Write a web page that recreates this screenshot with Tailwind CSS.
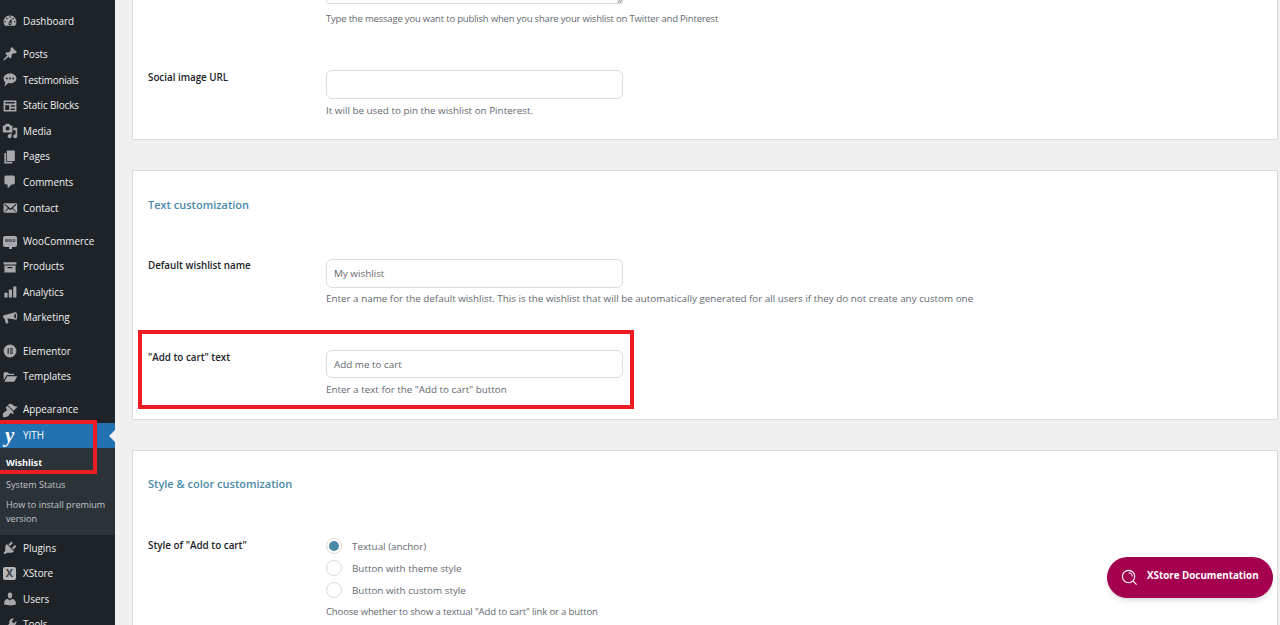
<!DOCTYPE html>
<html>

<head>
    <meta name="viewport" content="width=device-width, initial-scale=1.0">
    <title>Wishlist settings</title>
    <script src="https://cdn.jsdelivr.net/npm/@tailwindcss/browser@4"></script>
</head>

<body class="bg-[#f0f0f1] font-['Open_Sans',sans-serif]">

    <div class="relative flex h-[625px] overflow-hidden">

        <!-- sidebar -->
        <nav class="w-[115px] h-full shrink-0 bg-[#1d2327] pt-[8.4px] text-[9.9px] text-[#f0f0f1] overflow-hidden">
            <a class="flex items-center h-[25.6px]">
                <svg class="w-[16px] h-[16px] ml-[2px] mr-[5px] fill-[#a7aaad]" viewBox="0 0 20 20"><path d="M3.76 16h12.48c1.1-1.37 1.76-3.11 1.76-5 0-4.42-3.58-8-8-8s-8 3.58-8 8c0 1.89.66 3.63 1.76 5zM10 4c.55 0 1 .45 1 1s-.45 1-1 1-1-.45-1-1 .45-1 1-1zM6 6c.55 0 1 .45 1 1s-.45 1-1 1-1-.45-1-1 .45-1 1-1zm8 0c.55 0 1 .45 1 1s-.45 1-1 1-1-.45-1-1 .45-1 1-1zm-5.37 5.55L12 7v6c0 1.1-.9 2-2 2s-2-.9-2-2c0-.57.24-1.08.63-1.45zM4 10c.55 0 1 .45 1 1s-.45 1-1 1-1-.45-1-1 .45-1 1-1zm12 0c.55 0 1 .45 1 1s-.45 1-1 1-1-.45-1-1 .45-1 1-1zm-5 3c0-.55-.45-1-1-1s-1 .45-1 1 .45 1 1 1 1-.45 1-1z" fill-rule="evenodd"/></svg>
                <span>Dashboard</span>
            </a>

            <a class="flex items-center h-[25.6px] mt-[7.6px]">
                <svg class="w-[16px] h-[16px] ml-[2px] mr-[5px] fill-[#a7aaad]" viewBox="0 0 20 20"><path d="M10.44 3.02l1.82-1.82 6.36 6.35-1.83 1.82c-1.05-.68-2.48-.57-3.41.36l-.75.75c-.92.93-1.04 2.35-.35 3.41l-1.83 1.82-2.41-2.41-2.8 2.79c-.42.42-3.38 2.71-3.8 2.29s1.86-3.39 2.28-3.81l2.79-2.79L4.1 9.36l1.83-1.82c1.05.69 2.48.57 3.4-.36l.75-.75c.93-.92 1.05-2.35.36-3.41z"/></svg>
                <span>Posts</span>
            </a>
            <a class="flex items-center h-[25.6px]">
                <svg class="w-[16px] h-[16px] ml-[2px] mr-[5px] fill-[#a7aaad]" viewBox="0 0 20 20"><path fill-rule="evenodd" d="M10 2c4.4 0 8 2.6 8 6s-3.6 6-8 6c-.7 0-1.4-.1-2-.2L3 18l1.2-5.3C2.8 11.6 2 9.900 2 8c0-3.400 3.600-6 8-6zM6 7a1.200 1.200 0 100 2.400A1.200 1.200 0 006 7zm4 0a1.200 1.200 0 100 2.400A1.200 1.200 0 0010 7zm4 0a1.200 1.200 0 100 2.400A1.200 1.200 0 0014 7z"/></svg>
                <span class="tracking-[-0.2px]">Testimonials</span>
            </a>
            <a class="flex items-center h-[25.6px]">
                <svg class="w-[16px] h-[16px] ml-[2px] mr-[5px] fill-[#a7aaad]" viewBox="0 0 20 20"><path fill-rule="evenodd" d="M2 3h16v14H2zM4 5v2h12V5zM4 9v6h5V9zm7 0v2h5V9zm0 4v2h5v-2z"/></svg>
                <span class="tracking-[-0.1px]">Static Blocks</span>
            </a>
            <a class="flex items-center h-[25.6px]">
                <svg class="w-[16px] h-[16px] ml-[2px] mr-[5px] fill-[#a7aaad]" viewBox="0 0 20 20"><path d="M13 11V4c0-.55-.45-1-1-1h-1.670L9 1H5L3.670 3H2c-.55 0-1 .45-1 1v7c0 .55.45 1 1 1h10c.55 0 1-.45 1-1zM7 4.500c1.380 0 2.500 1.120 2.500 2.500S8.380 9.500 7 9.500 4.500 8.380 4.500 7 5.620 4.500 7 4.500zM14 6h5v10.500c0 1.380-1.120 2.500-2.500 2.500S14 17.880 14 16.500s1.120-2.500 2.500-2.500c.17 0 .34.020.5.050V9h-3V6zm-4 8.050V13h2v3.500c0 1.380-1.120 2.500-2.500 2.500S7 17.880 7 16.500 8.120 14 9.500 14c.17 0 .34.020.5.050z"/></svg>
                <span>Media</span>
            </a>
            <a class="flex items-center h-[25.6px]">
                <svg class="w-[16px] h-[16px] ml-[2px] mr-[5px] fill-[#a7aaad]" viewBox="0 0 20 20"><path d="M6 15V2h10v13H6zm-1 1h8v2H3V5h2v11z"/></svg>
                <span>Pages</span>
            </a>
            <a class="flex items-center h-[25.6px]">
                <svg class="w-[16px] h-[16px] ml-[2px] mr-[5px] fill-[#a7aaad]" viewBox="0 0 20 20"><path d="M5 2h9c1.100 0 2 .9 2 2v7c0 1.100-.9 2-2 2h-2l-5 5v-5H5c-1.100 0-2-.9-2-2V4c0-1.100.9-2 2-2z"/></svg>
                <span>Comments</span>
            </a>
            <a class="flex items-center h-[25.6px]">
                <svg class="w-[16px] h-[16px] ml-[2px] mr-[5px] fill-[#a7aaad]" viewBox="0 0 20 20"><path d="M19 14.500v-9c0-.83-.67-1.500-1.500-1.500H3.490c-.83 0-1.500.67-1.500 1.500v9c0 .83.67 1.500 1.500 1.500H17.500c.83 0 1.500-.67 1.500-1.500zm-1.310-9.110c.33.33.15.67-.03.84L13.600 9.950l3.900 4.060c.12.14.2.36.06.51-.13.16-.43.15-.56.05l-4.370-3.730-2.140 1.950-2.130-1.950-4.370 3.730c-.13.1-.43.11-.56-.05-.14-.15-.06-.37.06-.51l3.900-4.060-4.060-3.720c-.18-.17-.36-.51-.03-.84s.67-.17.95.07l6.240 5.040 6.250-5.040c.28-.24.62-.4.95-.07z"/></svg>
                <span>Contact</span>
            </a>

            <a class="flex items-center h-[25.6px] mt-[7.6px]">
                <span class="relative flex items-center justify-center w-[14px] h-[11px] ml-[3px] mr-[6px] rounded-[2px] bg-[#a7aaad] text-[5px] font-bold text-[#3c4247]">woo<span class="absolute left-[6px] bottom-[-2px] w-[3px] h-[3px] bg-[#a7aaad]"></span></span>
                <span>WooCommerce</span>
            </a>
            <a class="flex items-center h-[25.6px]">
                <svg class="w-[16px] h-[16px] ml-[2px] mr-[5px] fill-[#a7aaad]" viewBox="0 0 20 20"><path fill-rule="evenodd" d="M2 4h16v3H2zM3 8h14v9H3zM7 10v1.500h6V10z"/></svg>
                <span>Products</span>
            </a>
            <a class="flex items-center h-[25.6px]">
                <svg class="w-[16px] h-[16px] ml-[2px] mr-[5px] fill-[#a7aaad]" viewBox="0 0 20 20"><path d="M3 11h4v6H3zM8.500 7h4v10h-4zM14 3h4v14h-4z"/></svg>
                <span>Analytics</span>
            </a>
            <a class="flex items-center h-[25.6px]">
                <svg class="w-[16px] h-[16px] ml-[2px] mr-[5px] fill-[#a7aaad]" viewBox="0 0 20 20"><path fill-rule="evenodd" d="M18 3.500c1.300 1.500 1.500 6 .3 8-.5.700-1.200.800-1.800.400L8 10.500H6.800l1.200 5c.1.600-.2 1-.8 1.100l-1.500.3c-.5.100-1-.2-1.100-.7l-1.300-5.300C1.800 10.300 1 9 1.500 7.700c.3-1 1.200-1.500 2.200-1.600L15.500 3c1-.3 1.900-.2 2.500.5zM15.800 5c-.7.900-.6 4 .2 5 .6.600 1.200.3 1.400-.4.3-1 .2-3-.2-4-.3-.8-.9-1.100-1.400-.6z"/></svg>
                <span>Marketing</span>
            </a>

            <a class="flex items-center h-[25.6px] mt-[7.6px]">
                <svg class="w-[16px] h-[16px] ml-[2px] mr-[5px] fill-[#a7aaad]" viewBox="0 0 20 20"><path fill-rule="evenodd" d="M10 2a8 8 0 110 16 8 8 0 010-16zM7 6.500v7h1.500v-7zM10 6.500V8h3.500V6.500zM10 9.250v1.500h3.500v-1.500zM10 12v1.500h3.500V12z"/></svg>
                <span>Elementor</span>
            </a>
            <a class="flex items-center h-[25.6px]">
                <svg class="w-[16px] h-[16px] ml-[2px] mr-[5px] fill-[#a7aaad]" viewBox="0 0 20 20"><path d="M2 5c0-.6.4-1 1-1h4l2 2h6v1.500H6L2 14V5zm1 11l3.500-7H19l-3.500 7H3z"/></svg>
                <span>Templates</span>
            </a>

            <a class="flex items-center h-[25.6px] mt-[7.6px]">
                <svg class="w-[16px] h-[16px] ml-[2px] mr-[5px] fill-[#a7aaad]" viewBox="0 0 20 20"><path d="M14.480 11.060L7.410 3.990l1.500-1.500c.5-.56 2.300-.47 3.510.32 1.210.8 1.430 1.280 2.910 2.100 1.180.64 2.450 1.260 4.450.85zm-.71.71L6.700 4.700 4.930 6.470c-.39.39-.39 1.020 0 1.410l1.060 1.060c.39.39.39 1.030 0 1.420-.6.6-1.430 1.110-2.210 1.690-.35.26-.7.53-1.010.84C1.430 13.230.78 15.780 1.200 18.800c3 .42 5.560-.22 6.910-1.570.31-.31.58-.66.84-1.010.58-.78 1.090-1.610 1.690-2.210.39-.39 1.020-.39 1.410 0l1.060 1.060c.39.39 1.020.39 1.410 0z"/></svg>
                <span>Appearance</span>
            </a>

            <a class="relative flex items-center h-[25.6px] bg-[#2271b1] text-white">
                <span class="w-[23px] pl-[5px] font-['Liberation_Serif',serif] text-[21px] leading-none font-bold italic">y</span>
                <span>YITH</span>
                <span class="absolute right-0 top-[7px] border-y-[6px] border-r-[6px] border-y-transparent border-r-[#f0f0f1]"></span>
            </a>
            <div class="bg-[#2c3338] pt-[6px] pb-[6px] pl-[6px] pr-[4px] text-[9.1px] text-[#c3c4c7]">
                <a class="block h-[20px] leading-[18px] font-bold text-white">Wishlist</a>
                <a class="block h-[21px] leading-[21px]">System Status</a>
                <a class="block leading-[14px] py-[3px]">How to install premium version</a>
            </div>

            <a class="flex items-center h-[25.6px]">
                <svg class="w-[16px] h-[16px] ml-[2px] mr-[5px] fill-[#a7aaad]" viewBox="0 0 20 20"><path d="M13.110 4.360L9.870 7.600 8 5.730l3.240-3.240c.35-.34 1.050-.2 1.560.32.52.51.66 1.210.31 1.550zm-8 1.770l.91-1.120 9.010 9.010-1.190.84c-.71.71-2.630 1.160-3.820 1.160H6.140L4.900 17.260c-.59.59-1.540.59-2.120 0-.59-.58-.59-1.530 0-2.120l1.240-1.240v-3.880c0-1.130.4-3.190 1.090-3.890zm7.260 3.970l3.240-3.240c.34-.35 1.040-.21 1.550.31.52.51.66 1.210.31 1.550l-3.240 3.250z"/></svg>
                <span>Plugins</span>
            </a>
            <a class="flex items-center h-[25.6px]">
                <span class="flex items-center justify-center w-[13px] h-[13px] ml-[3px] mr-[7px] rounded-[2px] bg-[#b4b6b8] text-[11px] font-bold text-[#3c4247]">X</span>
                <span>XStore</span>
            </a>
            <a class="flex items-center h-[25.6px]">
                <svg class="w-[16px] h-[16px] ml-[2px] mr-[5px] fill-[#a7aaad]" viewBox="0 0 20 20"><path d="M10 9.250c-2.270 0-2.730-3.440-2.730-3.440C7 4.020 7.820 2 9.970 2c2.160 0 2.980 2.020 2.710 3.810 0 0-.41 3.440-2.680 3.440zm0 2.570L12.720 10c2.390 0 4.520 2.330 4.520 4.530v2.490s-3.650 1.130-7.240 1.130c-3.650 0-7.240-1.130-7.240-1.130v-2.490c0-2.250 1.940-4.480 4.470-4.480z"/></svg>
                <span>Users</span>
            </a>
            <a class="flex items-center h-[25.6px]">
                <svg class="w-[16px] h-[16px] ml-[2px] mr-[5px] fill-[#a7aaad]" viewBox="0 0 20 20"><path d="M16.680 9.770c-1.340 1.340-3.300 1.670-4.950.99l-5.410 6.520c-.99.99-2.590.99-3.580 0s-.99-2.590 0-3.570l6.520-5.420c-.68-1.650-.35-3.610.99-4.950 1.280-1.280 3.120-1.620 4.720-1.060l-2.890 2.890 2.820 2.820 2.860-2.870c.53 1.580.18 3.390-1.080 4.650z"/></svg>
                <span>Tools</span>
            </a>
        </nav>

        <!-- settings -->
        <main class="flex-1 flex flex-col pl-[17px] pr-[2px] text-[9.85px] text-[#646970]">

            <section class="h-[140px] shrink-0 overflow-hidden bg-white border-x border-b border-[#dcdcde] pl-[15px]">
                <div class="grid grid-cols-[178px_1fr]">
                    <div></div>
                    <div>
                        <div class="relative w-[297px] h-[4px] rounded-b-[6px] border-x border-b border-[#dcdcde]">
                            <svg class="absolute right-0 bottom-0 w-[5px] h-[4px] stroke-[#8c8f94]" viewBox="0 0 5 4"><path d="M1 4L3 0M3 4L5 0"/></svg>
                        </div>
                        <p class="mt-[8px] leading-[14px] text-[9.5px] tracking-[-0.19px]">Type the message you want to publish when you share your wishlist on Twitter and Pinterest</p>
                    </div>
                </div>
                <div class="grid grid-cols-[178px_1fr] mt-[44px]">
                    <label class="mt-[1px] leading-[14px] text-[9.8px] font-semibold text-[#1d2327]">Social image URL</label>
                    <div>
                        <div class="w-[297px] h-[29px] rounded-[6px] border border-[#dcdcde]"></div>
                        <p class="mt-[4px] leading-[14px]">It will be used to pin the wishlist on Pinterest.</p>
                    </div>
                </div>
            </section>

            <section class="h-[250px] shrink-0 mt-[30px] bg-white border border-[#dcdcde] pl-[15px]">
                <h2 class="mt-[26px] leading-[16px] text-[11px] font-semibold text-[#4a8aa8]">Text customization</h2>
                <div class="grid grid-cols-[178px_1fr] mt-[46px]">
                    <label class="leading-[14px] text-[9.8px] font-semibold text-[#1d2327]">Default wishlist name</label>
                    <div>
                        <div class="flex items-center w-[297px] h-[29px] px-[7px] rounded-[6px] border border-[#dcdcde]">My wishlist</div>
                        <p class="mt-[3px] leading-[14px]">Enter a name for the default wishlist. This is the wishlist that will be automatically generated for all users if they do not create any custom one</p>
                    </div>
                </div>
                <div class="grid grid-cols-[178px_1fr] mt-[45px]">
                    <label class="mt-[1px] leading-[14px] text-[9.8px] font-semibold text-[#1d2327]">"Add to cart" text</label>
                    <div>
                        <div class="flex items-center w-[297px] h-[28px] pt-[1px] px-[7px] rounded-[6px] border border-[#dcdcde]">Add me to cart</div>
                        <p class="mt-[4px] leading-[14px]">Enter a text for the "Add to cart" button</p>
                    </div>
                </div>
            </section>

            <section class="flex-1 mt-[30px] bg-white border-x border-t border-[#dcdcde] pl-[15px]">
                <h2 class="mt-[25px] leading-[16px] text-[11px] font-semibold text-[#4a8aa8]">Style &amp; color customization</h2>
                <div class="grid grid-cols-[178px_1fr] mt-[43px]">
                    <label class="mt-[3px] leading-[14px] font-semibold text-[#1d2327]">Style of "Add to cart"</label>
                    <div>
                        <div class="flex items-center h-[22px] gap-[10px]">
                            <span class="flex items-center justify-center w-[16px] h-[16px] rounded-full border border-[#dcdcde]"><span class="w-[10px] h-[10px] rounded-full bg-[#4a8aa8]"></span></span>
                            <span>Textual (anchor)</span>
                        </div>
                        <div class="flex items-center h-[22px] gap-[10px]">
                            <span class="w-[16px] h-[16px] rounded-full border border-[#dcdcde]"></span>
                            <span>Button with theme style</span>
                        </div>
                        <div class="flex items-center h-[22px] gap-[10px]">
                            <span class="w-[16px] h-[16px] rounded-full border border-[#dcdcde]"></span>
                            <span>Button with custom style</span>
                        </div>
                        <p class="mt-[4px] leading-[14px] text-[9.5px] tracking-[-0.13px]">Choose whether to show a textual "Add to cart" link or a button</p>
                    </div>
                </div>
            </section>
        </main>

        <!-- red annotation boxes drawn over the screenshot -->
        <div class="absolute left-[-4px] top-[420px] w-[101px] h-[54px] border-[4px] border-[#ed1c24]"></div>
        <div class="absolute left-[138px] top-[330px] w-[496px] h-[79px] border-[4px] border-[#ed1c24]"></div>

        <!-- docs button -->
        <a class="absolute left-[1107px] top-[557px] flex items-center w-[166px] h-[41px] rounded-full bg-[#a5004f] text-white shadow-md">
            <svg class="w-[17px] h-[17px] ml-[14px] mr-[9px] fill-none stroke-white stroke-[1.2]" viewBox="0 0 18 18"><circle cx="8" cy="8" r="6.500"/><path d="M12.800 12.800L16.500 16.500M8 4a4 4 0 014 4"/></svg>
            <span class="-mt-[2px] text-[9.8px] font-bold">XStore Documentation</span>
        </a>
    </div>

</body>

</html>
